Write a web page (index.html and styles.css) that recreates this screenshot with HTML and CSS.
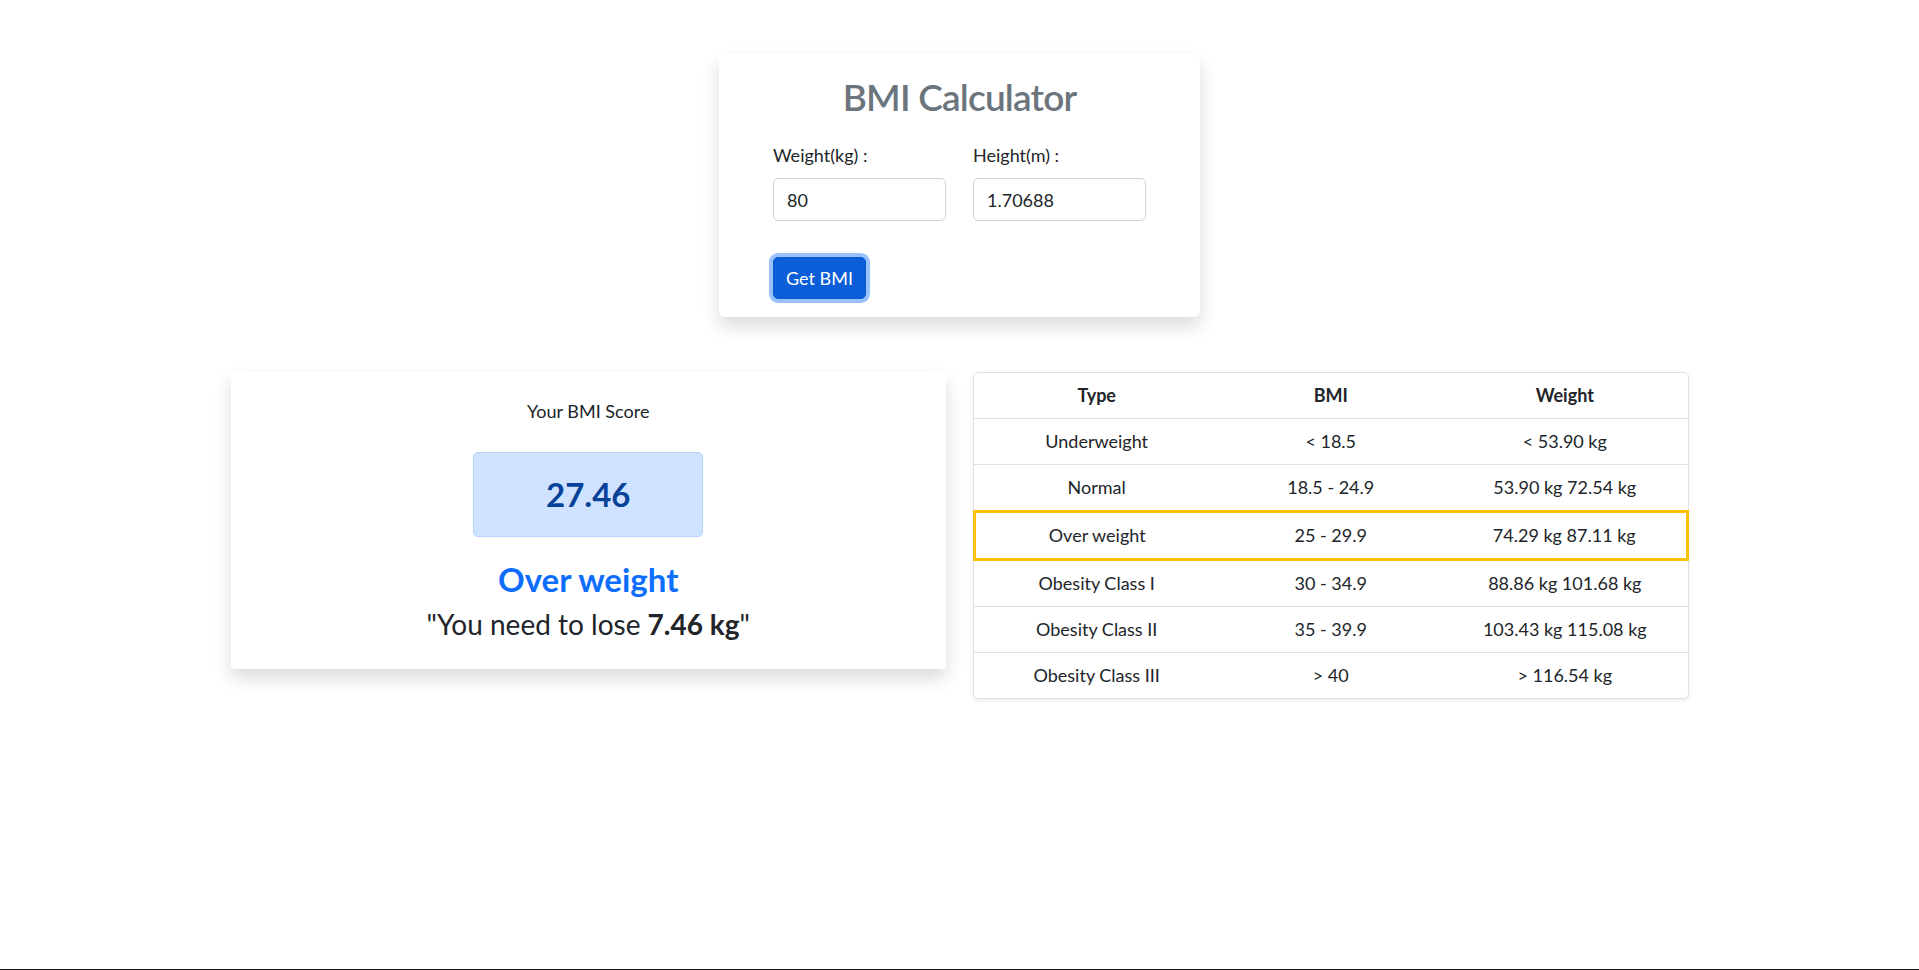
FILE: index.html
```html
<!DOCTYPE html>
<html lang="en">
<head>
<meta charset="utf-8">
<title>BMI Calculator</title>
<link rel="stylesheet" href="styles.css">
</head>
<body>
<main class="main">
  <section class="calc-card">
    <h1 class="calc-title">BMI Calculator</h1>
    <form class="calc-form">
      <div class="field-row">
        <div class="field">
          <label class="field-label" for="weight">Weight(kg) :</label>
          <input class="field-input" id="weight" type="text" value="80">
        </div>
        <div class="field">
          <label class="field-label" for="height">Height(m) :</label>
          <input class="field-input" id="height" type="text" value="1.70688">
        </div>
      </div>
      <button class="btn-primary" type="button">Get BMI</button>
    </form>
  </section>

  <div class="results">
    <section class="score-card">
      <p class="score-label">Your BMI Score</p>
      <div class="score-box">27.46</div>
      <h3 class="score-type">Over weight</h3>
      <p class="score-advice">"You need to lose <strong>7.46 kg</strong>"</p>
    </section>

    <div class="table-wrap">
      <table class="bmi-table">
        <colgroup>
          <col class="col-side">
          <col class="col-mid">
          <col class="col-side">
        </colgroup>
        <thead>
          <tr><th>Type</th><th>BMI</th><th>Weight</th></tr>
        </thead>
        <tbody>
          <tr><td>Underweight</td><td>&lt; 18.5</td><td>&lt; 53.90 kg</td></tr>
          <tr><td>Normal</td><td>18.5 - 24.9</td><td>53.90 kg 72.54 kg</td></tr>
          <tr class="is-active"><td>Over weight</td><td>25 - 29.9</td><td>74.29 kg 87.11 kg</td></tr>
          <tr><td>Obesity Class I</td><td>30 - 34.9</td><td>88.86 kg 101.68 kg</td></tr>
          <tr><td>Obesity Class II</td><td>35 - 39.9</td><td>103.43 kg 115.08 kg</td></tr>
          <tr><td>Obesity Class III</td><td>&gt; 40</td><td>&gt; 116.54 kg</td></tr>
        </tbody>
      </table>
    </div>
  </div>
</main>
<footer class="page-end"></footer>
</body>
</html>
```

FILE: styles.css
```css
* { box-sizing: border-box; }

html, body { margin: 0; padding: 0; }

body {
  min-height: 100vh;
  display: flex;
  flex-direction: column;
  background: #fff;
  color: #212529;
  font-family: "Lato", "Open Sans", "Liberation Sans", sans-serif;
  font-size: 18px;
  line-height: 27px;
}

.main {
  flex: 1;
  padding-top: 54px;
}

.page-end {
  height: 1px;
  background: #161616;
}

/* calculator card */
.calc-card {
  width: 481px;
  margin: 0 auto;
  background: #fff;
  border-radius: 6px;
  box-shadow: 0 9px 18px rgba(0, 0, 0, 0.15);
  padding: 19px 54px 18px;
}

.calc-title {
  margin: 0;
  text-align: center;
  font-size: 37px;
  line-height: 48px;
  font-weight: 600;
  letter-spacing: -0.8px;
  color: #6c757d;
}

.calc-form {
  margin-top: 21px;
}

.field-row {
  display: flex;
  gap: 27px;
}

.field {
  flex: 1;
  display: flex;
  flex-direction: column;
}

.field-label {
  display: block;
  margin-bottom: 9px;
}

.field-input {
  display: block;
  width: 100%;
  height: 43px;
  padding: 7px 13px;
  border: 1px solid #ced4da;
  border-radius: 5px;
  font: inherit;
  line-height: 27px;
  color: #212529;
  background: #fff;
}

.btn-primary {
  display: inline-block;
  margin-top: 36px;
  height: 42px;
  padding: 6px 12px;
  border: 1px solid #0a58ca;
  border-radius: 5px;
  background: #0b5ed7;
  color: #fff;
  font: inherit;
  line-height: 28px;
  box-shadow: 0 0 0 4px #98c2fe;
  cursor: pointer;
}

/* results row */
.results {
  width: 1458px;
  margin: 55px auto 0;
  display: grid;
  grid-template-columns: 1fr 1fr;
  column-gap: 27px;
  align-items: start;
}

.score-card {
  background: #fff;
  border-radius: 4px;
  box-shadow: 0 9px 18px rgba(0, 0, 0, 0.15);
  padding: 26px 20px 28px;
  display: flex;
  flex-direction: column;
  align-items: center;
  text-align: center;
}

.score-label {
  margin: 0;
}

.score-box {
  margin-top: 27px;
  width: 230px;
  padding: 21px 0 22px;
  background: #cfe2ff;
  border: 1px solid #b6d4fe;
  border-radius: 5px;
  color: #084298;
  font-size: 33px;
  line-height: 40px;
  font-weight: 700;
}

.score-type {
  margin: 22px 0 0;
  font-size: 33px;
  line-height: 40px;
  font-weight: 700;
  color: #0d6efd;
}

.score-advice {
  margin: 9px 0 0;
  font-size: 28px;
  line-height: 33px;
}

.score-advice strong { font-weight: 700; }

/* table */
.table-wrap {
  border: 1px solid #dee2e6;
  border-radius: 5px;
  box-shadow: 0 2px 4px rgba(0, 0, 0, 0.075);
  background: #fff;
}

.bmi-table {
  width: calc(100% + 2px);
  margin: -1px;
  border-collapse: collapse;
  table-layout: fixed;
  text-align: center;
}

.col-side { width: 34.3%; }
.col-mid { width: 31.4%; }

.bmi-table th,
.bmi-table td {
  padding: 9px 9px;
  line-height: 27px;
  border-top: 1px solid transparent;
  border-left: 1px solid transparent;
  border-right: 1px solid transparent;
  border-bottom: 1px solid #dee2e6;
}

.bmi-table th { font-weight: 700; }

.bmi-table tbody tr:last-child td { border-bottom-color: transparent; }

.bmi-table tr.is-active td {
  border-top: 3px solid #ffc107;
  border-bottom: 3px solid #ffc107;
}

.bmi-table tr.is-active td:first-child { border-left: 3px solid #ffc107; }
.bmi-table tr.is-active td:last-child { border-right: 3px solid #ffc107; }
```
